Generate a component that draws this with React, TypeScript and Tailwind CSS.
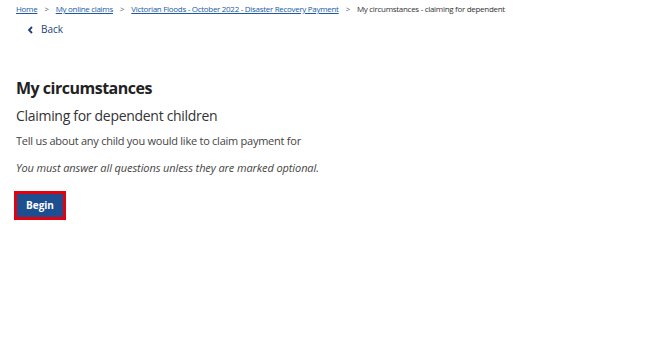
export default function App() {
  const crumbs = ['Home', 'My online claims', 'Victorian Floods - October 2022 - Disaster Recovery Payment'];
  return (
    <div className="min-h-screen w-full bg-white font-['Open_Sans',sans-serif] text-[#333]">
      <nav className="flex items-center pl-4 pt-[3px] text-[8px] leading-[12px] tracking-[-0.3px]">
        {crumbs.map((c) => (
          <span key={c} className="flex items-center">
            <a href="#" className="text-[#1a5aa6] underline">
              {c}
            </a>
            <span className="mx-[7px] text-[#555]">&gt;</span>
          </span>
        ))}
        <span className="text-[#333]">My circumstances - claiming for dependent</span>
      </nav>
      <a href="#" className="ml-[27px] mt-[7px] flex items-center gap-[8px] text-[10px] text-[#1d3f7a]">
        <svg width="6" height="8" viewBox="0 0 6 8" fill="none">
          <path d="M5 1 L2 4 L5 7" stroke="#1d3f7a" strokeWidth="1.8" />
        </svg>
        <span>Back</span>
      </a>
      <main className="px-4 pt-[40px]">
        <h1 className="text-[16px] font-bold leading-[22px] tracking-[-0.5px] text-[#222]">My circumstances</h1>
        <h2 className="mt-[7px] text-[14px] leading-[20px] tracking-[-0.3px] text-[#333]">
          Claiming for dependent children
        </h2>
        <p className="mt-[7px] text-[11px] leading-[16px] tracking-[-0.25px] text-[#444]">
          Tell us about any child you would like to claim payment for
        </p>
        <p className="mt-[11px] text-[11px] italic leading-[16px] tracking-[-0.1px] text-[#444]">
          You must answer all questions unless they are marked optional.
        </p>
        <button className="mt-[15px] -ml-[2px] border-[3px] border-[#e3000f] bg-[#1d4e8f] px-[9px] py-[4px] text-[10px] font-bold leading-[15px] text-white">
          Begin
        </button>
      </main>
    </div>
  );
}
